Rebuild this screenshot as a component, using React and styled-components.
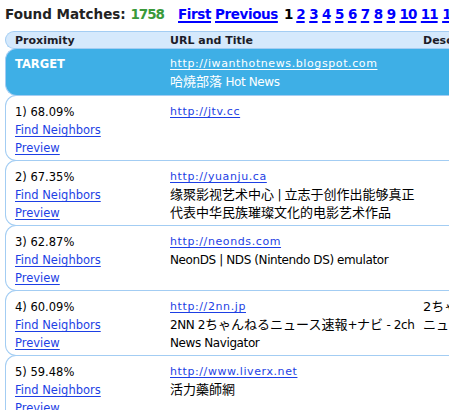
import React from "react";
import styled, { createGlobalStyle } from "styled-components";

const Global = createGlobalStyle`
  html, body { margin: 0; padding: 0; overflow: hidden; background: #fff; }
  body { font-family: "DejaVu Sans", Verdana, "Noto Sans CJK JP", sans-serif; font-size: 11px; color: #000; }
`;

const Page = styled.div`
  padding: 4px 0 0 5px;
  width: 900px;
`;

const Heading = styled.div`
  font-size: 13.5px;
  font-weight: bold;
  line-height: 20px;
  color: #222;
  white-space: nowrap;
`;

const Count = styled.span`
  color: #3a9a3a;
  letter-spacing: -1px;
  margin-right: 14px;
`;

const PageLink = styled.a`
  color: #0000ff;
  text-decoration: underline;
  text-underline-offset: 2px;
  text-decoration-thickness: 2px;
  margin-right: ${(p) => (p.$num ? "4.5px" : "4px")};
  letter-spacing: ${(p) => (p.$num ? "-1px" : "-0.4px")};
`;

const Current = styled.span`
  color: #000;
  margin: 0 4px 0 2px;
  letter-spacing: -1px;
`;

const Table = styled.div`
  margin-top: 8px;
  width: 680px;
  display: flex;
  flex-direction: column;
`;

const Row = styled.div`
  display: grid;
  grid-template-columns: 164px 253px 1fr;
  border: 1px solid #a3cdf3;
  border-right: none;
  border-radius: ${(p) => p.$radius || 11}px 0 0 ${(p) => p.$radius || 11}px;
  margin-top: -1px;
  background: ${(p) => p.$bg || "#fff"};
  color: ${(p) => p.$fg || "#000"};
  padding: ${(p) => p.$pad || "7px 0 3px"};
  line-height: 18px;
`;

const HeadCell = styled.div`
  font-weight: bold;
  color: #1c1c28;
  padding-left: ${(p) => (p.$first ? "9px" : "0")};
  line-height: 15px;
  white-space: nowrap;
`;

const Cell = styled.div`
  padding-left: ${(p) => (p.$first ? "9px" : "0")};
  min-width: 0;
  font-size: ${(p) => (p.$first ? "11.5px" : "11px")};
  font-weight: ${(p) => (p.$bold ? "bold" : "normal")};
`;

const Line = styled.div`
  white-space: nowrap;
`;

const Title = styled.div`
  font-size: 12px;
  line-height: 18px;
  letter-spacing: -0.4px;
`;

const Cjk = styled.span`
  font-size: 13px;
  line-height: 14px;
  letter-spacing: 0;
`;

const Url = styled.a`
  color: ${(p) => (p.$white ? "#fff" : "#1d3fe4")};
  text-decoration: underline;
  text-underline-offset: 2px;
  letter-spacing: 0.6px;
  white-space: nowrap;
`;

const Link = styled.a`
  color: #1d3fe4;
  text-decoration: underline;
  text-underline-offset: 2px;
`;

const Desc = styled.div`
  font-size: 13px;
  line-height: 18px;
  white-space: nowrap;
`;

const rows = [
  { n: 1, p: "68.09%", url: "http://jtv.cc", title: null },
  {
    n: 2,
    p: "67.35%",
    url: "http://yuanju.ca",
    title: [
      ["c", "缘聚影视艺术中心"],
      ["l", " | "],
      ["c", "立志于创作出能够真正代表中华民族璀璨文化的电影艺术作品"],
    ],
  },
  { n: 3, p: "62.87%", url: "http://neonds.com", title: [["l", "NeonDS | NDS (Nintendo DS) emulator"]] },
  {
    n: 4,
    p: "60.09%",
    url: "http://2nn.jp",
    title: [
      ["l", "2NN 2"],
      ["c", "ちゃんねるニュース速報"],
      ["l", "+"],
      ["c", "ナビ"],
      ["l", " - 2ch News Navigator"],
    ],
    desc: ["2ちゃんねる", "ニュース"],
  },
  { n: 5, p: "59.48%", url: "http://www.liverx.net", title: [["c", "活力藥師網"]] },
];

const renderTitle = (parts) =>
  parts.map(([k, t], i) => (k === "c" ? <Cjk key={i}>{t}</Cjk> : <span key={i}>{t}</span>));

export default function App() {
  return (
    <>
      <Global />
      <Page>
        <Heading>
          Found Matches: <Count>1758</Count>
          <PageLink href="#">First</PageLink>
          <PageLink href="#">Previous</PageLink>
          <Current>1</Current>
          {[2, 3, 4, 5, 6, 7, 8, 9, 10, 11, 12].map((n) => (
            <PageLink key={n} href="#" $num>
              {n}
            </PageLink>
          ))}
        </Heading>
        <Table>
          <Row $bg="#d5e9fc" $pad="1px 0 0" $radius={9}>
            <HeadCell $first>Proximity</HeadCell>
            <HeadCell>URL and Title</HeadCell>
            <HeadCell>Description</HeadCell>
          </Row>
          <Row $bg="#3eafe6" $fg="#fff" $pad="6px 0 4px" $radius={12}>
            <Cell $first $bold>TARGET</Cell>
            <Cell>
              <Line><Url href="#" $white>http://iwanthotnews.blogspot.com</Url></Line>
              <Title>{renderTitle([["c", "哈燒部落"], ["l", " Hot News"]])}</Title>
            </Cell>
            <Cell />
          </Row>
          {rows.map((r) => (
            <Row key={r.n}>
              <Cell $first>
                <Line>{r.n}) {r.p}</Line>
                <Line><Link href="#">Find Neighbors</Link></Line>
                <Line><Link href="#">Preview</Link></Line>
              </Cell>
              <Cell>
                <Line><Url href="#">{r.url}</Url></Line>
                {r.title && <Title>{renderTitle(r.title)}</Title>}
              </Cell>
              <Desc>
                {(r.desc || []).map((d) => (
                  <div key={d}>{d}</div>
                ))}
              </Desc>
            </Row>
          ))}
        </Table>
      </Page>
    </>
  );
}
